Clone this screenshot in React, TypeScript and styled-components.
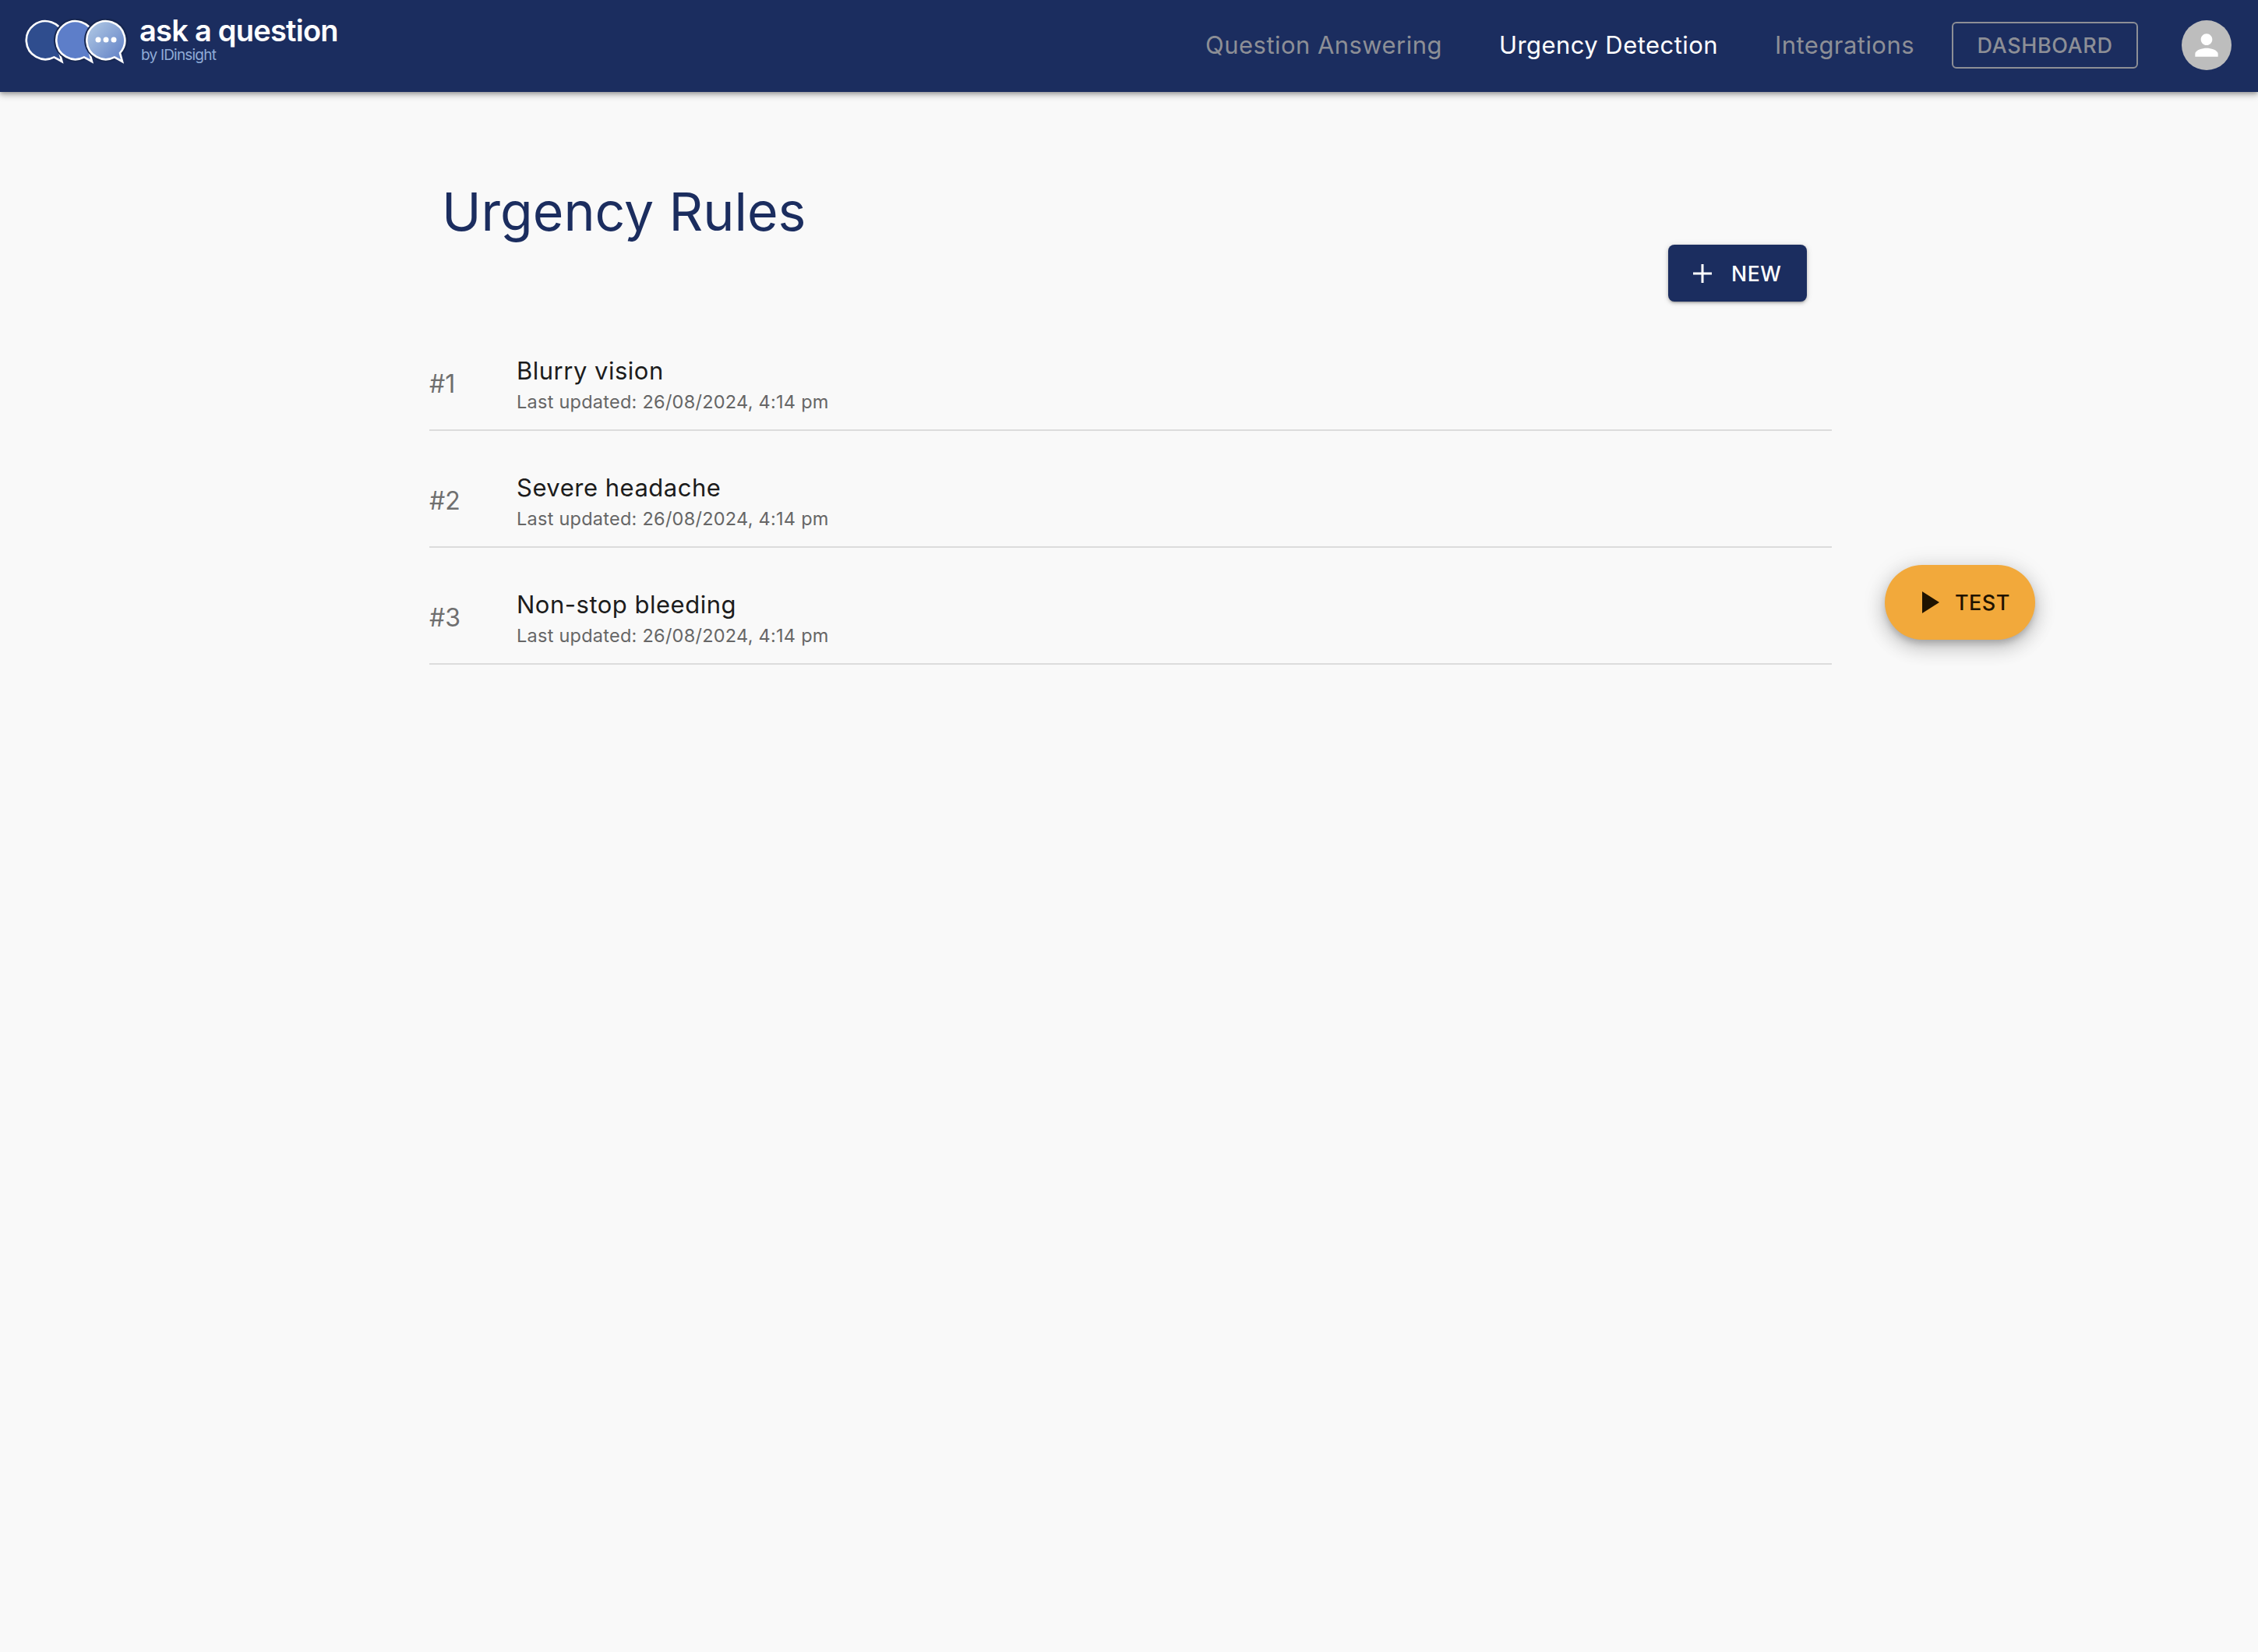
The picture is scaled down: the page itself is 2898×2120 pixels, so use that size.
import React from "react";
import styled, { createGlobalStyle } from "styled-components";

const Global = createGlobalStyle`
  html, body { margin: 0; padding: 0; background: #f9f9f9; }
  body { font-family: Inter, "Noto Sans", sans-serif; }
  * { box-sizing: border-box; }
`;

const Page = styled.div`
  position: relative;
  width: 2898px;
  height: 2120px;
  background: #f9f9f9;
  overflow: hidden;
`;

const Header = styled.header`
  height: 118px;
  background: #1b2d5f;
  box-shadow: 0 4px 8px rgba(0, 0, 0, 0.28), 0 2px 4px rgba(0, 0, 0, 0.16);
  display: flex;
  align-items: center;
  justify-content: space-between;
  padding: 0 34px 2px 32px;
`;

const Brand = styled.div`
  display: flex;
  align-items: center;
  gap: 15px;
  margin-top: -16px;
`;

const LogoMark = styled.svg`
  flex: none;
  margin-top: 6px;
`;

const BrandText = styled.div`
  display: flex;
  flex-direction: column;
`;

const BrandName = styled.span`
  font-size: 38px;
  font-weight: 600;
  line-height: 41px;
  letter-spacing: -0.75px;
  color: #fff;
`;

const BrandSub = styled.span`
  font-size: 19px;
  line-height: 22px;
  letter-spacing: -0.8px;
  color: #8fabd6;
  margin-left: 2px;
`;

const Nav = styled.nav`
  display: flex;
  align-items: center;
`;

const NavLink = styled.a<{ $active?: boolean; $gap: number }>`
  font-size: 31px;
  line-height: 40px;
  letter-spacing: 0.45px;
  color: ${(p) => (p.$active ? "#ffffff" : "#8d8f96")};
  margin-right: ${(p) => p.$gap}px;
`;

const DashButton = styled.button`
  width: 239px;
  height: 60px;
  border: 2px solid #8d8f96;
  border-radius: 6px;
  background: transparent;
  color: #8d8f96;
  font: 500 27px Inter, sans-serif;
  letter-spacing: 0.6px;
  margin-right: 56px;
`;

const Avatar = styled.div`
  width: 64px;
  height: 64px;
  border-radius: 50%;
  background: #bdbdbd;
  display: flex;
  align-items: center;
  justify-content: center;
`;

const Main = styled.main`
  width: 1800px;
  margin-left: 551px;
`;

const Title = styled.h1`
  margin: 0;
  padding: 112px 0 0 16px;
  font-size: 68px;
  line-height: 82px;
  font-weight: 400;
  letter-spacing: 0;
  color: #1b2d5f;
`;

const ActionRow = styled.div`
  display: flex;
  justify-content: flex-end;
  padding-right: 32px;
`;

const NewButton = styled.button`
  width: 178px;
  height: 73px;
  margin-top: 2px;
  display: flex;
  align-items: center;
  padding-left: 32px;
  gap: 25px;
  border: 0;
  border-radius: 8px;
  background: #1b2d5f;
  color: #fff;
  font: 500 26.5px Inter, sans-serif;
  letter-spacing: 0.6px;
  box-shadow: 0 3px 2px -2px rgba(0, 0, 0, 0.2), 0 2px 4px rgba(0, 0, 0, 0.2), 0 1px 8px rgba(0, 0, 0, 0.12);
`;

const Rules = styled.div`
  margin-top: 16px;
`;

const Rule = styled.div`
  height: 150px;
  padding-top: 30px;
  border-bottom: 2px solid #dcdcdc;
  display: flex;
  align-items: center;
`;

const RuleNumber = styled.span`
  width: 112px;
  font-size: 32px;
  color: #6f6f6f;
`;

const RuleBody = styled.div`
  display: flex;
  flex-direction: column;
  gap: 5px;
  margin-top: 4px;
`;

const RuleName = styled.span`
  font-size: 31px;
  line-height: 38px;
  letter-spacing: 0.5px;
  color: #1c1c1c;
`;

const RuleDate = styled.span`
  font-size: 23.5px;
  line-height: 32px;
  letter-spacing: 0.25px;
  color: #666;
`;

const TestFab = styled.button`
  position: absolute;
  left: 2419px;
  top: 725px;
  width: 193px;
  height: 96px;
  border: 0;
  border-radius: 48px;
  background: #f2a93b;
  color: #1f1300;
  font: 500 27px Inter, sans-serif;
  letter-spacing: 0.45px;
  display: flex;
  align-items: center;
  padding-left: 48px;
  gap: 20px;
  box-shadow: 0 6px 10px -2px rgba(0, 0, 0, 0.2), 0 10px 24px 2px rgba(0, 0, 0, 0.14), 0 4px 28px 4px rgba(0, 0, 0, 0.1);
`;

const bubblePath = (cx: number) =>
  `M${cx + 18} 44A24.5 24.5 0 1 0 ${cx + 11} 49.4L${cx + 21} 55L${cx + 18} 44Z`;

const Logo = () => (
  <LogoMark width="132" height="58" viewBox="0 0 132 58" aria-hidden="true">
    <defs>
      <linearGradient id="g3" x1="0" y1="0" x2="1" y2="1">
        <stop offset="0" stopColor="#b5cde6" />
        <stop offset="1" stopColor="#5c7cc4" />
      </linearGradient>
    </defs>
    <path d={bubblePath(26.5)} fill="#2f4d8e" stroke="#fff" strokeWidth="2.6" />
    <circle cx="65" cy="27.5" r="28" fill="#16264f" />
    <path d={bubblePath(65)} fill="#5d7ec9" stroke="#fff" strokeWidth="2.6" />
    <circle cx="104" cy="27.5" r="28" fill="#16264f" />
    <path d={bubblePath(104)} fill="url(#g3)" stroke="#fff" strokeWidth="2.6" />
    <circle cx="94" cy="27" r="3.5" fill="#fff" />
    <circle cx="104" cy="27" r="3.5" fill="#fff" />
    <circle cx="114" cy="27" r="3.5" fill="#fff" />
  </LogoMark>
);

const rules = ["Blurry vision", "Severe headache", "Non-stop bleeding"];

export default function App() {
  return (
    <Page>
      <Global />
      <Header>
        <Brand>
          <Logo />
          <BrandText>
            <BrandName>ask a question</BrandName>
            <BrandSub>by IDinsight</BrandSub>
          </BrandText>
        </Brand>
        <Nav>
          <NavLink $gap={73}>Question Answering</NavLink>
          <NavLink $gap={73} $active>Urgency Detection</NavLink>
          <NavLink $gap={48}>Integrations</NavLink>
          <DashButton>DASHBOARD</DashButton>
          <Avatar>
            <svg width="44" height="44" viewBox="0 0 24 24" fill="#fff" aria-hidden="true">
              <path d="M12 12c2.21 0 4-1.79 4-4s-1.79-4-4-4-4 1.79-4 4 1.79 4 4 4zm0 2c-2.67 0-8 1.34-8 4v2h16v-2c0-2.66-5.33-4-8-4z" />
            </svg>
          </Avatar>
        </Nav>
      </Header>
      <Main>
        <Title>Urgency Rules</Title>
        <ActionRow>
          <NewButton>
            <svg width="24" height="24" viewBox="0 0 24 24" aria-hidden="true">
              <path d="M12 0v24M0 12h24" stroke="#fff" strokeWidth="3" />
            </svg>
            NEW
          </NewButton>
        </ActionRow>
        <Rules>
          {rules.map((name, i) => (
            <Rule key={name}>
              <RuleNumber>#{i + 1}</RuleNumber>
              <RuleBody>
                <RuleName>{name}</RuleName>
                <RuleDate>Last updated: 26/08/2024, 4:14 pm</RuleDate>
              </RuleBody>
            </Rule>
          ))}
        </Rules>
      </Main>
      <TestFab>
        <svg width="22" height="28" viewBox="0 0 22 28" aria-hidden="true">
          <path d="M0 0l22 14L0 28z" fill="#1f1300" />
        </svg>
        TEST
      </TestFab>
    </Page>
  );
}
